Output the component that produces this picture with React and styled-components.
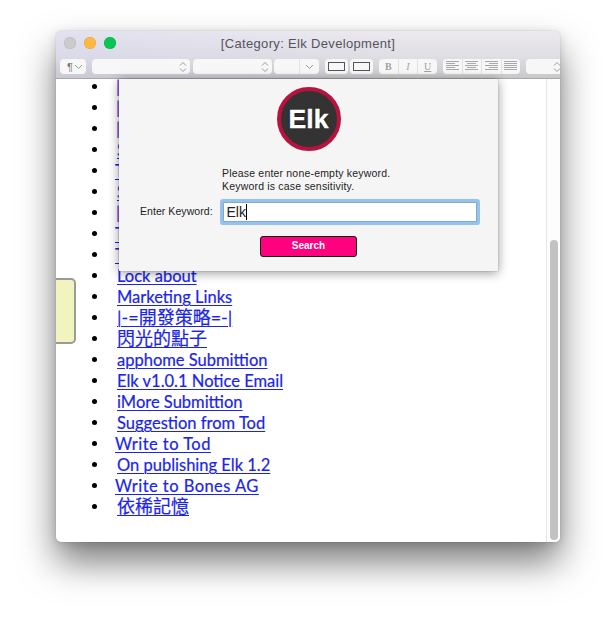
import React from 'react'
import styled, { createGlobalStyle } from 'styled-components'

const Global = createGlobalStyle`
  html, body {
    margin: 0;
    background: #fff;
    overflow: hidden;
  }
`

const entries = [
  { text: '|-=-|', visited: true, pull: 1 },
  { text: '|-=-|', visited: true, pull: 1 },
  { text: '|-=-|', visited: true, pull: 1 },
  { text: 'S' },
  { text: 'To', pull: 2 },
  { text: 'S' },
  { text: '|-=', visited: true, pull: 1 },
  { text: 'To', pull: 2 },
  { text: 'To', pull: 2 },
  { text: 'Lock about' },
  { text: 'Marketing Links' },
  { text: '|-=開發策略=-|', cjk: true },
  { text: '閃光的點子', cjk: true },
  { text: 'apphome Submittion' },
  { text: 'Elk v1.0.1 Notice Email' },
  { text: 'iMore Submittion' },
  { text: 'Suggestion from Tod' },
  { text: 'Write to Tod', pull: 2, wide: true },
  { text: 'On publishing Elk 1.2' },
  { text: 'Write to Bones AG', pull: 2, wide: true },
  { text: '依稀記憶', cjk: true },
]

function Chevrons() {
  return (
    <svg width="8" height="12" viewBox="0 0 8 12" fill="none" stroke="#9a9a9a" strokeWidth="1">
      <path d="M1 4.5 L4 1.5 L7 4.5" />
      <path d="M1 7.5 L4 10.5 L7 7.5" />
    </svg>
  )
}

function ChevronDown() {
  return (
    <svg width="9" height="6" viewBox="0 0 9 6" fill="none" stroke="#9a9a9a" strokeWidth="1">
      <path d="M1 1 L4.5 4.5 L8 1" />
    </svg>
  )
}

function AlignIcon({ kind }) {
  const lines = {
    left: [[0, 13], [0, 9], [0, 13], [0, 9], [0, 13]],
    center: [[0, 13], [2, 9], [0, 13], [2, 9], [0, 13]],
    right: [[0, 13], [4, 9], [0, 13], [4, 9], [0, 13]],
    justify: [[0, 13], [0, 13], [0, 13], [0, 13], [0, 13]],
  }[kind]
  return (
    <svg width="13" height="11" viewBox="0 0 13 11" stroke="#a8a8a8" strokeWidth="1">
      {lines.map(([x, w], i) => (
        <line key={i} x1={x} x2={x + w} y1={i * 2 + 0.5} y2={i * 2 + 0.5} />
      ))}
    </svg>
  )
}

export default function App() {
  return (
    <>
      <Global />
      <Page>
        <Window>
          <TitleBar>
            <Lights>
              <Light $color="#cbcbcb" $edge="#b9b9b9" />
              <Light $color="#fdb743" $edge="#eaa63a" />
              <Light $color="#07c653" $edge="#0bb54c" />
            </Lights>
            <Title>[Category: Elk Development]</Title>
          </TitleBar>
          <Toolbar>
            <Control $width={26}>
              <Pilcrow>¶</Pilcrow>
              <ChevronDown />
            </Control>
            <Control $width={98} $left={6} $end>
              <Chevrons />
            </Control>
            <Control $width={79} $left={3} $end>
              <Chevrons />
            </Control>
            <Segmented $width={45} $left={2}>
              <Segment $grow={26} />
              <Segment $grow={19}>
                <ChevronDown />
              </Segment>
            </Segmented>
            <RectButton $left={6}><RectMark /></RectButton>
            <RectButton $left={2}><RectMark /></RectButton>
            <Segmented $width={58} $left={6}>
              <Segment><StyleLetter $bold>B</StyleLetter></Segment>
              <Segment><StyleLetter $italic>I</StyleLetter></Segment>
              <Segment><StyleLetter $under>U</StyleLetter></Segment>
            </Segmented>
            <Segmented $width={77} $left={6}>
              <Segment><AlignIcon kind="left" /></Segment>
              <Segment><AlignIcon kind="center" /></Segment>
              <Segment><AlignIcon kind="right" /></Segment>
              <Segment><AlignIcon kind="justify" /></Segment>
            </Segmented>
            <Control $width={38} $left={6} $end>
              <Chevrons />
            </Control>
          </Toolbar>
          <Body>
            <Content>
              <List>
                {entries.map((entry, i) => (
                  <Row key={i}>
                    <EntryLink
                      href="#"
                      $cjk={entry.cjk}
                      $pull={entry.pull}
                      $visited={entry.visited}
                      $wide={entry.wide}
                    >
                      {entry.text}
                    </EntryLink>
                  </Row>
                ))}
              </List>
            </Content>
            <ScrollTrack>
              <ScrollThumb />
            </ScrollTrack>
            <SideTab />
            <Popover>
              <Logo>
                <LogoText>Elk</LogoText>
              </Logo>
              <Hint>
                Please enter none-empty keyword.
                <br />
                Keyword is case sensitivity.
              </Hint>
              <FormRow>
                <FieldLabel>Enter Keyword:</FieldLabel>
                <Field>
                  Elk
                  <Caret />
                </Field>
              </FormRow>
              <SearchButton>Search</SearchButton>
            </Popover>
          </Body>
        </Window>
      </Page>
    </>
  )
}

const Page = styled.div`
  width: 616px;
  height: 622px;
  box-sizing: border-box;
  padding: 31px 56px 80px;
  background: #fff;
`

const Window = styled.div`
  display: flex;
  flex-direction: column;
  height: 511px;
  border-radius: 5px;
  overflow: hidden;
  background: #fff;
  box-shadow: 0 0 1px rgba(0, 0, 0, 0.35), 0 20px 36px rgba(0, 0, 0, 0.52), 0 2px 10px rgba(0, 0, 0, 0.12);
`

const TitleBar = styled.div`
  position: relative;
  height: 26px;
  flex: none;
  display: flex;
  align-items: center;
  justify-content: center;
  background:
    linear-gradient(90deg, rgba(205, 205, 245, 0.3), rgba(205, 205, 245, 0) 70%),
    linear-gradient(180deg, #eceaee 0%, #dfdee3 100%);
`

const Lights = styled.div`
  position: absolute;
  left: 8px;
  top: 6px;
  display: flex;
  gap: 8px;
`

const Light = styled.span`
  width: 12px;
  height: 12px;
  border-radius: 50%;
  background: ${props => props.$color};
  box-shadow: inset 0 0 0 0.5px ${props => props.$edge};
`

const Title = styled.div`
  margin-bottom: 2px;
  font: 13px "Liberation Sans", Arial, sans-serif;
  color: #55535d;
  letter-spacing: 0.33px;
`

const Toolbar = styled.div`
  height: 22px;
  flex: none;
  box-sizing: border-box;
  display: flex;
  align-items: flex-start;
  padding: 2px 0 0 4px;
  background:
    linear-gradient(90deg, rgba(205, 205, 245, 0.25), rgba(205, 205, 245, 0) 70%),
    linear-gradient(180deg, #dfdee3 0%, #c8c7ca 100%);
  border-bottom: 1px solid #a9a9ab;
  overflow: hidden;
`

const Control = styled.div`
  width: ${props => props.$width}px;
  height: 15px;
  flex: none;
  box-sizing: border-box;
  display: flex;
  align-items: center;
  justify-content: ${props => (props.$end ? 'flex-end' : 'space-between')};
  margin-left: ${props => props.$left || 0}px;
  padding: 0 3px;
  background: #f7f7f7;
  border-radius: 4px;
`

const Pilcrow = styled.span`
  font: 11px "Liberation Sans", Arial, sans-serif;
  color: #777;
  margin-left: 4px;
`

const Segmented = styled.div`
  width: ${props => props.$width}px;
  height: 15px;
  flex: none;
  display: flex;
  margin-left: ${props => props.$left || 0}px;
  background: #f7f7f7;
  border-radius: 4px;
`

const Segment = styled.div`
  flex: ${props => props.$grow || 1} 1 0;
  display: flex;
  align-items: center;
  justify-content: center;
  & + & {
    border-left: 1px solid #e2e2e2;
  }
`

const StyleLetter = styled.span`
  font: ${props => (props.$bold ? 'bold ' : '')}${props => (props.$italic ? 'italic ' : '')}10px "Liberation Serif", serif;
  color: #a2a2a2;
  text-decoration: ${props => (props.$under ? 'underline' : 'none')};
`

const RectButton = styled.div`
  width: 23px;
  height: 15px;
  flex: none;
  display: flex;
  align-items: center;
  justify-content: center;
  margin-left: ${props => props.$left || 0}px;
  background: #f7f7f7;
  border-radius: 4px;
`

const RectMark = styled.span`
  width: 15px;
  height: 7px;
  border: 1px solid #555;
`

const Body = styled.div`
  position: relative;
  flex: 1;
  display: flex;
  min-height: 0;
`

const Content = styled.div`
  flex: 1;
  overflow: hidden;
`

const List = styled.ul`
  list-style: none;
  margin: -3px 0 0;
  padding: 0 0 0 36px;
`

const Row = styled.li`
  height: 21px;
  display: flex;
  align-items: center;
  &::before {
    content: '';
    width: 5px;
    height: 5px;
    flex: none;
    margin-right: 20px;
    border-radius: 50%;
    background: #000;
  }
`

const EntryLink = styled.a`
  margin-top: ${props => (props.$cjk ? '0' : '2px')};
  color: ${props => (props.$visited ? '#6d35d8' : '#1a24ee')};
  font-family: Lato, "Noto Sans CJK TC", sans-serif;
  font-size: ${props => (props.$cjk ? '18px' : '16.5px')};
  line-height: ${props => (props.$cjk ? '19px' : '21px')};
  letter-spacing: ${props => (props.$wide ? '0.45px' : '0')};
  margin-left: ${props => -(props.$pull || 0)}px;
  text-decoration: underline;
  text-decoration-thickness: 1px;
  text-underline-offset: 2px;
  -webkit-text-stroke: 0.2px;
  white-space: nowrap;
`

const ScrollTrack = styled.div`
  width: 14px;
  flex: none;
  box-sizing: border-box;
  padding: 161px 2px 2px 3px;
  border-left: 1px solid #e6e6e6;
  background: #fdfdfd;
`

const ScrollThumb = styled.div`
  height: 100%;
  width: 8px;
  border-radius: 4px;
  background: #c2c2c2;
`

const SideTab = styled.div`
  position: absolute;
  left: -2px;
  top: 199px;
  width: 22px;
  height: 66px;
  box-sizing: border-box;
  background: #f2f4c0;
  border: 2px solid #9a9a96;
  border-radius: 0 5px 5px 0;
`

const Popover = styled.div`
  position: absolute;
  left: 63px;
  top: 0;
  width: 379px;
  height: 192px;
  box-sizing: border-box;
  display: flex;
  flex-direction: column;
  align-items: center;
  padding-top: 8px;
  background: #f5f5f5;
  box-shadow: 0 2px 10px rgba(0, 0, 0, 0.4), 0 0 1px rgba(0, 0, 0, 0.4);
`

const Logo = styled.div`
  width: 64px;
  height: 64px;
  box-sizing: border-box;
  display: flex;
  align-items: center;
  justify-content: center;
  border-radius: 50%;
  background: #333;
  border: 4px solid #b8133f;
`

const LogoText = styled.span`
  font: bold 26.5px "Liberation Sans", Arial, sans-serif;
  color: #fff;
  -webkit-text-stroke: 0.4px #fff;
  text-shadow: 0 0 2px #000;
`

const Hint = styled.div`
  align-self: flex-start;
  margin: 16px 0 0 103px;
  font: 10.5px/13px "Liberation Sans", Arial, sans-serif;
  letter-spacing: 0.19px;
  color: #1d1d1d;
`

const FormRow = styled.div`
  align-self: flex-start;
  display: flex;
  align-items: center;
  margin: 9px 0 0 21px;
`

const FieldLabel = styled.label`
  width: 82.5px;
  margin-bottom: 2px;
  font: 10.5px "Liberation Sans", Arial, sans-serif;
  letter-spacing: 0.06px;
  color: #1d1d1d;
`

const Field = styled.div`
  width: 254px;
  height: 20px;
  box-sizing: border-box;
  display: flex;
  align-items: center;
  padding-left: 3px;
  background: #fff;
  border: 1px solid #8aa6c0;
  box-shadow: 0 0 0 3px #92c3f1;
  border-radius: 1px;
  font: 14px "Liberation Sans", Arial, sans-serif;
  color: #222;
`

const Caret = styled.span`
  width: 1px;
  height: 16px;
  background: #000;
`

const SearchButton = styled.button`
  width: 97px;
  height: 21px;
  margin-top: 14px;
  padding: 0 0 3px;
  background: #ff007f;
  border: 1px solid #111;
  border-radius: 3px;
  font: bold 10px "Liberation Sans", Arial, sans-serif;
  color: #fff;
`
